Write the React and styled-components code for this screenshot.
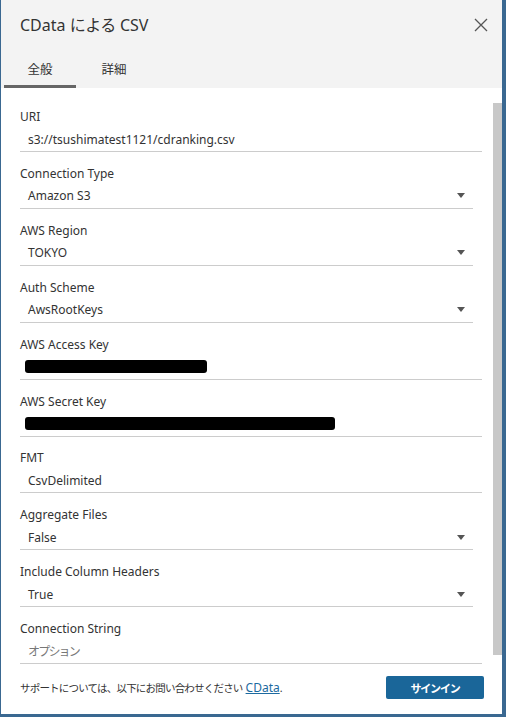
import React from 'react';
import styled, { createGlobalStyle } from 'styled-components';

const Global = createGlobalStyle`
  html, body { margin: 0; padding: 0; background: #3a6891; }
  body { font-family: "Noto Sans", "Noto Sans CJK JP", sans-serif; }
`;

const Dialog = styled.div`
  width: 501px;
  height: 714px;
  margin-left: 1px;
  background: #fff;
  display: flex;
  flex-direction: column;
  overflow: hidden;
`;

const Header = styled.div`
  background: #f3f3f3;
  height: 88px;
  display: flex;
  flex-direction: column;
`;

const TitleRow = styled.div`
  height: 50px;
  display: flex;
  align-items: center;
  justify-content: space-between;
  padding: 0 14px 0 19px;
`;

const Title = styled.div`
  font-size: 16px;
  color: #333;
  margin-top: -2px;
  span { letter-spacing: -0.5px; }
`;

const Close = styled.svg`
  width: 14px;
  height: 14px;
`;

const Tabs = styled.div`
  display: flex;
  margin-top: auto;
  padding-left: 3px;
`;

const Tab = styled.div`
  width: ${p => p.w}px;
  height: 38px;
  box-sizing: border-box;
  display: flex;
  align-items: center;
  justify-content: center;
  font-size: 12.5px;
  color: #333;
  padding-top: 1px;
  border-bottom: 3px solid ${p => (p.active ? '#666' : 'transparent')};
`;

const Body = styled.div`
  flex: 1;
  display: flex;
  min-height: 0;
`;

const Form = styled.div`
  flex: 1;
  padding: 19px 11px 0 19px;
  display: flex;
  flex-direction: column;
`;

const Field = styled.div`
  height: 57px;
  display: flex;
  flex-direction: column;
`;

const Label = styled.div`
  font-size: 12px;
  color: #333;
  height: 20px;
  line-height: 20px;
`;

const Value = styled.div`
  height: 24px;
  margin-right: ${p => (p.select ? '9px' : '0')};
  border-bottom: 1px solid #ccc;
  display: flex;
  align-items: center;
  justify-content: space-between;
  padding-left: 8px;
  padding-right: 8px;
  font-size: 12px;
  color: ${p => (p.placeholder ? '#777' : '#333')};
  letter-spacing: ${p => (p.placeholder ? '-1.8px' : '0')};
`;

const Redact = styled.div`
  width: ${p => p.w}px;
  height: 13px;
  background: #000;
  border-radius: 3px;
  margin-left: -3px;
`;

const Arrow = styled.div`
  width: 0;
  height: 0;
  border-left: 4.5px solid transparent;
  border-right: 4.5px solid transparent;
  border-top: 5px solid #555;
`;

const ScrollCol = styled.div`
  width: 9px;
  padding-top: 15px;
  display: flex;
  flex-direction: column;
`;

const Thumb = styled.div`
  height: 552px;
  background: #c8c8c8;
`;

const Footer = styled.div`
  display: flex;
  align-items: center;
  justify-content: space-between;
  padding: 0 18px 15px 19px;
  height: 23px;
`;

const Support = styled.div`
  font-size: 10.5px;
  letter-spacing: -0.8px;
  color: #333;
  a { color: #1c6aa0; text-decoration: underline; font-size: 12px; letter-spacing: 0; margin-left: 3px; }
`;

const SignIn = styled.button`
  width: 98px;
  height: 23px;
  background: #1a6699;
  color: #fff;
  border: none;
  border-radius: 2px;
  font-family: "Noto Sans CJK JP", sans-serif;
  font-weight: 700;
  font-size: 11px;
  letter-spacing: -1.2px;
`;

const fields = [
  { label: 'URI', value: 's3://tsushimatest1121/cdranking.csv' },
  { label: 'Connection Type', value: 'Amazon S3', select: true },
  { label: 'AWS Region', value: 'TOKYO', select: true },
  { label: 'Auth Scheme', value: 'AwsRootKeys', select: true },
  { label: 'AWS Access Key', redact: 182 },
  { label: 'AWS Secret Key', redact: 310 },
  { label: 'FMT', value: 'CsvDelimited' },
  { label: 'Aggregate Files', value: 'False', select: true },
  { label: 'Include Column Headers', value: 'True', select: true },
  { label: 'Connection String', value: 'オプション', placeholder: true },
];

export default function App() {
  return (
    <>
      <Global />
      <Dialog>
        <Header>
          <TitleRow>
            <Title>CData <span>による</span> CSV</Title>
            <Close viewBox="0 0 14 14">
              <path d="M1 1 L13 13 M13 1 L1 13" stroke="#555" strokeWidth="1.3" />
            </Close>
          </TitleRow>
          <Tabs>
            <Tab w={72} active>全般</Tab>
            <Tab w={76}>詳細</Tab>
          </Tabs>
        </Header>
        <Body>
          <Form>
            {fields.map(f => (
              <Field key={f.label}>
                <Label>{f.label}</Label>
                <Value select={f.select} placeholder={f.placeholder}>
                  {f.redact ? <Redact w={f.redact} /> : <span>{f.value}</span>}
                  {f.select && <Arrow />}
                </Value>
              </Field>
            ))}
          </Form>
          <ScrollCol>
            <Thumb />
          </ScrollCol>
        </Body>
        <Footer>
          <Support>
            サポートについては、以下にお問い合わせください<a>CData</a>.
          </Support>
          <SignIn>サインイン</SignIn>
        </Footer>
      </Dialog>
    </>
  );
}
